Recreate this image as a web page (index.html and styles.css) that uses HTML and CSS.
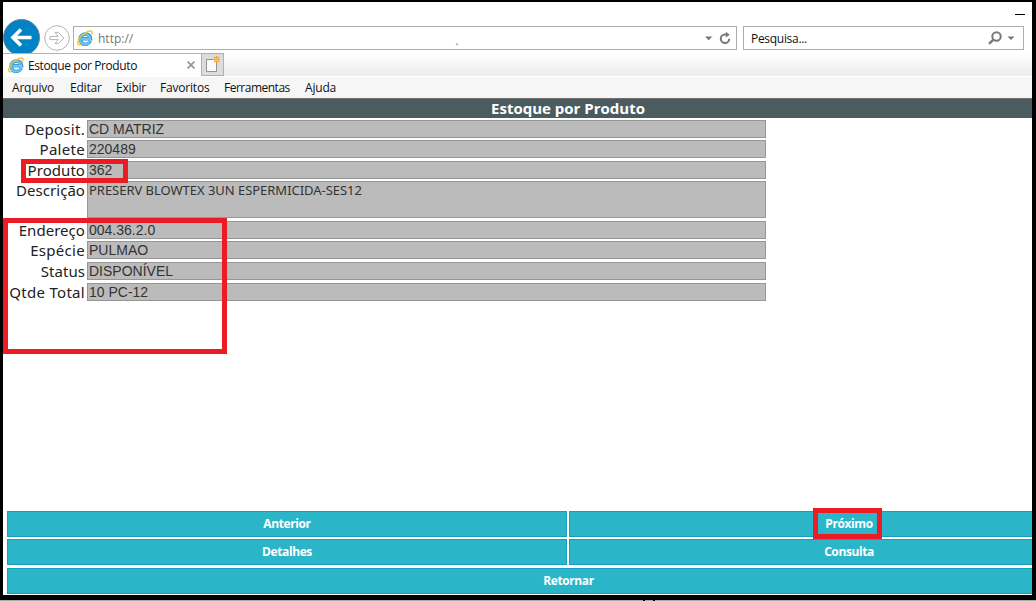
FILE: index.html
```html
<!DOCTYPE html>
<html lang="pt-BR">
<head>
    <meta charset="UTF-8">
    <title>Estoque por Produto</title>
    <link rel="stylesheet" href="styles.css">
</head>
<body>
    <svg width="0" height="0" class="defs">
        <symbol id="ie-logo" viewBox="0 0 16 16">
            <path d="M13.200 11A5.200 5.200 0 1 1 13.500 8.800H4.200" fill="none" stroke="#3391cd" stroke-width="3.600"/>
            <path d="M12.900 11A5.200 5.200 0 1 1 13.200 8.800H4.400" fill="none" stroke="#6cc4f0" stroke-width="2.200"/>
            <path d="M3.800 14.500C1.800 15.400.600 14.800.700 13 .900 9.800 4.700 5.300 8.700 2.700 12 .600 14.800.300 15.100 2c.1.900-.2 1.700-.6 2.600" fill="none" stroke="#f3c01c" stroke-width="1.300"/>
        </symbol>
    </svg>

    <div class="window">
        <div class="address-row">
            <svg class="back" width="37" height="34" viewBox="0 0 37 34">
                <circle cx="18.500" cy="18.500" r="18" fill="#0083c5" stroke="#69828f"/>
                <path d="M28.500 18.500H10M18 10.500l-8 8 8 8" fill="none" stroke="#fff" stroke-width="3.600"/>
            </svg>
            <svg class="forward" width="26" height="26" viewBox="0 0 26 26">
                <circle cx="13" cy="13" r="12.300" fill="#fff" stroke="#b4b4b4"/>
                <path d="M6 11.400h8.200l-3.200-4h3.400l5.500 5.600-5.500 5.600H11l3.200-4H6z" fill="#fff" stroke="#b4b4b4"/>
            </svg>
            <div class="address-box">
                <svg width="16" height="16"><use href="#ie-logo"/></svg>
                <span class="url">http://</span>
                <span class="dot">.</span>
                <svg class="address-tools" width="28" height="14" viewBox="0 0 28 14">
                    <path d="M1 5.500h7.400L4.700 9.200z" fill="#777"/>
                    <path d="M25.200 7.800a4.200 4.200 0 1 1-4.200-4.200h1.500" fill="none" stroke="#777" stroke-width="2"/>
                    <path d="M21.800.800l4 3-4 2.800z" fill="#777"/>
                </svg>
            </div>
            <div class="search-box">
                <span class="search-text">Pesquisa...</span>
                <svg width="28" height="14" viewBox="0 0 28 14">
                    <circle cx="8.500" cy="5.500" r="4.200" fill="none" stroke="#777" stroke-width="2"/>
                    <path d="M5.400 8.600L1 12.800" stroke="#777" stroke-width="2.400"/>
                    <path d="M19.500 5.500h7L23 9z" fill="#777"/>
                </svg>
            </div>
            <span class="minimize"></span>
        </div>

        <div class="tab-row">
            <div class="tab">
                <svg width="16" height="16"><use href="#ie-logo"/></svg>
                <span class="tab-title">Estoque por Produto</span>
                <svg class="tab-close" width="8" height="8" viewBox="0 0 8 8">
                    <path d="M.5.500l7 7M7.500.500l-7 7" stroke="#9b9b9b" stroke-width="1.800"/>
                </svg>
            </div>
            <div class="new-tab">
                <svg width="16" height="18" viewBox="0 0 16 18">
                    <path d="M1.500 3.500h10v12h-10z" fill="#fafafa" stroke="#929292"/>
                    <path d="M11.500 0v7M8 3.500h7M9 1l5 5M14 1L9 6" stroke="#f0a020" stroke-width="1.200"/>
                    <circle cx="11.500" cy="3.500" r="1.800" fill="#ffbd45"/>
                </svg>
            </div>
        </div>

        <div class="menu">
            <span class="m-arquivo">Arquivo</span>
            <span class="m-editar">Editar</span>
            <span class="m-exibir">Exibir</span>
            <span class="m-favoritos">Favoritos</span>
            <span class="m-ferramentas">Ferramentas</span>
            <span class="m-ajuda">Ajuda</span>
        </div>

        <h1 class="page-title">Estoque por Produto</h1>

        <div class="form">
            <label>Deposit.</label><div class="field">CD MATRIZ</div>
            <label>Palete</label><div class="field">220489</div>
            <label class="tight">Produto</label><div class="field">362</div>
            <label class="tight">Descrição</label><div class="field description">PRESERV BLOWTEX 3UN ESPERMICIDA-SES12</div>
            <label class="tight">Endereço</label><div class="field">004.36.2.0</div>
            <label>Espécie</label><div class="field">PULMAO</div>
            <label class="tight">Status</label><div class="field">DISPONÍVEL</div>
            <label>Qtde Total</label><div class="field">10 PC-12</div>
        </div>

        <div class="buttons">
            <button>Anterior</button>
            <button>Próximo</button>
            <button>Detalhes</button>
            <button>Consulta</button>
            <button class="wide">Retornar</button>
        </div>
    </div>
    <div class="bottom-strip"></div>

    <div class="mark mark-produto"></div>
    <div class="mark mark-detalhes"></div>
    <div class="mark mark-proximo"></div>
</body>
</html>
```
FILE: styles.css
```css
* {
    box-sizing: border-box;
}

body {
    margin: 0;
    width: 1036px;
    height: 601px;
    overflow: hidden;
    position: relative;
    background: #000;
    font-family: "Open Sans", "Noto Sans", sans-serif;
    font-size: 12px;
    color: #111;
}

.defs {
    position: absolute;
}

.window {
    width: 1029px;
    height: 593px;
    margin: 0 4px 0 3px;
    background: #fff;
    display: flex;
    flex-direction: column;
    overflow: hidden;
}

body {
    padding-top: 2px;
}

/* browser bar */
.address-row {
    height: 51px;
    padding-top: 17px;
    display: flex;
    align-items: flex-start;
    flex-shrink: 0;
    position: relative;
}

.forward {
    margin: 6px 0 0 4px;
}

.address-box,
.search-box {
    height: 24px;
    margin-top: 7px;
    border: 1px solid #adadad;
    background: #fff;
    display: flex;
    align-items: center;
}

.address-box {
    width: 664px;
    margin-left: 3px;
    padding: 0 4px 0 3px;
}

.url {
    margin-left: 5px;
    color: #777;
    font-size: 12px;
}

.dot {
    margin: 5px 0 0 322px;
    color: #777;
}

.address-tools {
    margin-left: auto;
}

.search-box {
    width: 281px;
    margin-left: 6px;
    padding: 0 7px;
    justify-content: space-between;
}

.search-text {
    letter-spacing: -0.3px;
}

.minimize {
    position: absolute;
    top: 12px;
    right: 7px;
    width: 10px;
    height: 1px;
    background: #000;
}

.tab-row {
    height: 23px;
    display: flex;
    flex-shrink: 0;
    background: linear-gradient(#fff, #ececec);
}

.tab {
    width: 198px;
    padding: 0 6px 0 5px;
    border-top: 1px solid #b4b4b4;
    background: #fff;
    display: flex;
    align-items: center;
}

.tab-title {
    margin-left: 4px;
    letter-spacing: -0.4px;
    white-space: nowrap;
}

.tab-close {
    margin-left: auto;
}

.new-tab {
    width: 23px;
    border: 1px solid #b0b0b0;
    background: #dcdcdc;
    display: flex;
    align-items: center;
    justify-content: center;
}

.menu {
    height: 22px;
    padding-left: 9px;
    border-top: 1px solid #fff;
    background: #f6f6f6;
    display: flex;
    gap: 16px;
    flex-shrink: 0;
    line-height: 21px;
    letter-spacing: -0.2px;
}

.m-arquivo { width: 42px; }
.m-editar { width: 30px; }
.m-exibir { width: 28px; }
.m-favoritos { width: 48px; }
.m-ferramentas { width: 65px; letter-spacing: -0.5px; }

/* page */
.page-title {
    height: 20px;
    margin: 0;
    padding-left: 101px;
    border-top: 1px solid #72706e;
    background: #4a5c60;
    color: #fff;
    font-size: 15px;
    font-weight: 700;
    line-height: 18px;
    text-align: center;
    letter-spacing: 0;
    flex-shrink: 0;
}

.form {
    width: 763px;
    padding-top: 2px;
    display: grid;
    grid-template-columns: 82px 679px;
    grid-template-rows: 20px 21px 20px 40px 20px 21px 21px 18px;
    column-gap: 2px;
    align-items: start;
}

.form label {
    font-family: "Noto Sans", sans-serif;
    font-size: 15px;
    line-height: 18px;
    color: #222;
    text-align: right;
    white-space: nowrap;
    letter-spacing: 0.3px;
}

.form label.tight {
    letter-spacing: 0.05px;
}

.field {
    height: 18px;
    padding-left: 1px;
    border: 1px solid #969696;
    background: #bbb;
    color: #333;
    font-family: "Liberation Sans", sans-serif;
    font-size: 14px;
    line-height: 16px;
}

.description {
    height: 37px;
    font-family: "Noto Sans", sans-serif;
    font-size: 13px;
    letter-spacing: -0.03px;
}

.buttons {
    margin: auto 0 1px 4px;
    width: 1026px;
    display: grid;
    grid-template-columns: 560px 1fr;
    grid-template-rows: 26px 26px 27px;
    gap: 2px;
}

.buttons button {
    padding: 0 0 2px;
    border: 1px solid #159fbd;
    background: #2ab6c8;
    color: #fff;
    font-family: "Open Sans", sans-serif;
    font-size: 12px;
    font-weight: 700;
    letter-spacing: -0.4px;
}

.buttons button:nth-child(even) {
    padding-left: 96px;
}

.buttons .wide {
    grid-column: 1 / 3;
    height: 26px;
    margin-top: 1px;
    padding-left: 97px;
}

.bottom-strip {
    height: 1px;
    margin-top: 5px;
    background: linear-gradient(90deg, #aaa 643px, #000 643px, #000 645px, #aaa 645px, #aaa 653px, #000 653px, #000 655px, #aaa 655px);
}

/* highlight frames over the page */
.mark {
    position: absolute;
    border: 5px solid #ed1c24;
}

.mark-produto {
    left: 21px;
    top: 159px;
    width: 107px;
    height: 24px;
}

.mark-detalhes {
    left: 3px;
    top: 218px;
    width: 224px;
    height: 136px;
}

.mark-proximo {
    left: 813px;
    top: 508px;
    width: 69px;
    height: 31px;
}
```
